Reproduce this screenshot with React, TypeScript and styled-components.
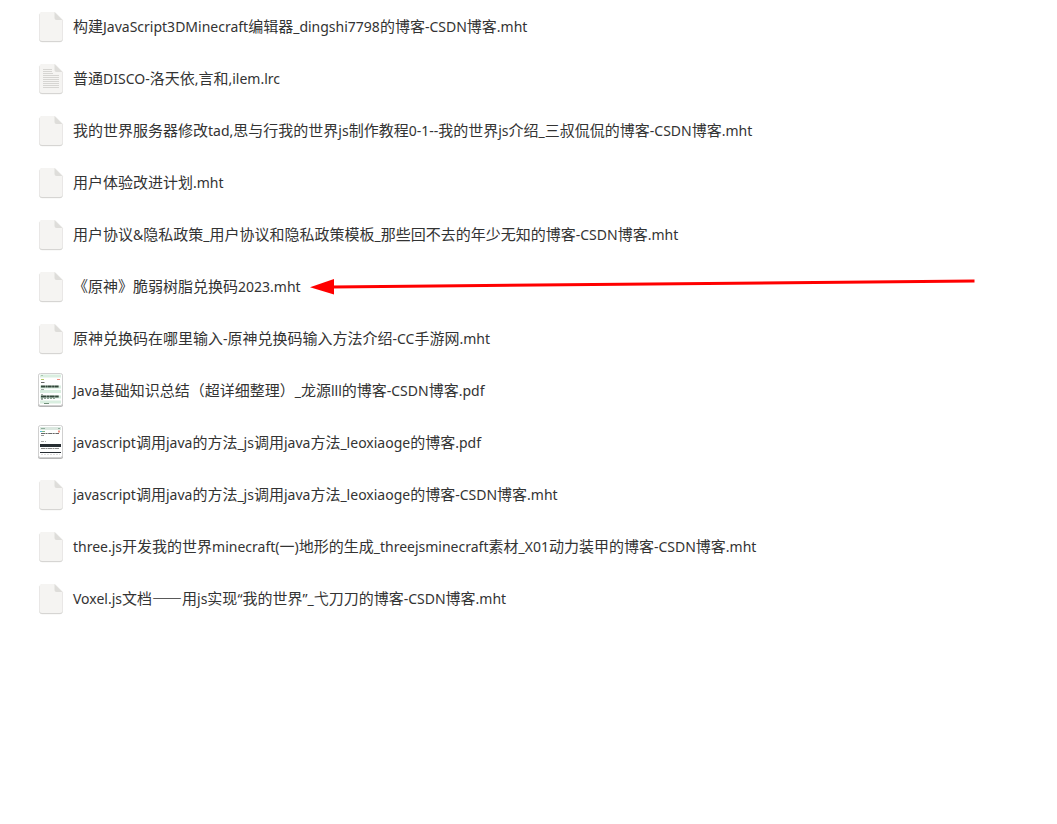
import React from "react";
import styled, { createGlobalStyle } from "styled-components";

const GlobalStyle = createGlobalStyle`
  body {
    margin: 0;
    background: #ffffff;
    color: #333333;
    font-family: "Noto Sans CJK SC", "Noto Sans", sans-serif;
  }
`;

const FileList = styled.ul`
  position: relative;
  margin: 0;
  padding: 0 36px;
  list-style: none;
`;

const FileRow = styled.li`
  display: flex;
  align-items: center;
  gap: 7px;
  height: 52px;
`;

const FileIcon = styled.svg`
  flex: none;
  display: block;
  width: 30px;
  height: 40px;
`;

const FileName = styled.span`
  font-size: 15px;
  line-height: 20px;
  white-space: nowrap;
`;

const Latin = styled.span`
  font-family: "Noto Sans", sans-serif;
  font-size: 14px;
`;

const Arrow = styled.svg`
  position: absolute;
  left: 310px;
  top: 276px;
  width: 668px;
  height: 22px;
  pointer-events: none;
`;

type Kind = "blank" | "text" | "pdfGreen" | "pdfDark";

const sheet = "M6.500 6H19l7.500 7.500v19a2.500 2.500 0 0 1-2.500 2.500H6a2.500 2.500 0 0 1-2.500-2.500v-24A2.500 2.500 0 0 1 6.500 6z";

function PageIcon({ lines }: { lines?: boolean }) {
  return (
    <FileIcon viewBox="0 0 30 40" aria-hidden="true">
      <path d={sheet} transform="translate(0 .8)" fill="#ececea" stroke="#e9e9e8" strokeWidth="1" />
      <path d={sheet} transform="translate(0 .7)" fill="#cfcecb" />
      <path d={sheet} fill="#f5f4f2" />
      <path d="M18.500 6l8 8h-6a2 2 0 0 1-2-2z" fill="#deddda" />
      {lines && (
        <path
          d="M7 11.500h9M7 13.500h9M7 15.500h10M7 17.500h16M7 19.500h16M7 21.500h16M7 23.500h16M7 25.500h16M7 27.500h16M7 29.500h16"
          stroke="#d6d5d2"
          strokeWidth="1"
        />
      )}
    </FileIcon>
  );
}

function Thumbnail({ dark }: { dark?: boolean }) {
  return (
    <FileIcon viewBox="0 0 30 40" aria-hidden="true">
      <rect x="2" y="4" width="25" height="33" rx="2.500" fill="#b4b4b4" />
      <rect x="2.500" y="3.500" width="24" height="32" rx="2" fill="#fff" stroke="#d0d0d0" />
      {dark ? (
        <g>
          <path d="M4 6.500h21" stroke="#dbe8e0" strokeWidth="3" />
          <path d="M5 6.500h4M22 6.500h2" stroke="#8fae9c" />
          <path d="M4 9.500h2" stroke="#58b7d8" />
          <path d="M6 9.500h3" stroke="#80b882" />
          <path d="M22 9.500h2" stroke="#ef8f80" strokeWidth="2" />
          <path d="M5 11.500h18" stroke="#666" strokeDasharray="4 .5 2 .7" />
          <path d="M5 13.500h3" stroke="#999" />
          <path d="M5 19.500h5" stroke="#aaa" strokeDasharray="3 1" />
          <path d="M4 23.500h21" stroke="#272d32" strokeWidth="3" />
          <path d="M5 26.500h18" stroke="#8d8d8d" strokeDasharray="4 .5 2 .5" />
          <path d="M4 30.500h21" stroke="#272d32" strokeWidth="1" />
          <path d="M5 32.500h19" stroke="#ddd" strokeDasharray="2 1" />
        </g>
      ) : (
        <g>
          <path d="M4 6h21M4 17h21M4 21.500h21M4 27h21M4 32h21" stroke="#d9eee0" strokeWidth="3" />
          <path d="M5 5.500h2" stroke="#a9c6b1" />
          <path d="M5 9.500h3" stroke="#b6c967" />
          <path d="M21 9.500h3" stroke="#ef8f80" strokeWidth="1" />
          <path d="M5 12.500h4" stroke="#666" strokeDasharray="3 .5" />
          <path d="M5 16.500h18" stroke="#33463a" strokeWidth="2" strokeDasharray="4 .4 2 .3" />
          <path d="M5 19.500h3M5 24.500h2M5 29.500h2" stroke="#a5afa8" />
          <path d="M5 26.500h18" stroke="#33463a" strokeWidth="2" strokeDasharray="5 .4 3 .3" />
          <path d="M5 28.500h14" stroke="#8ca092" strokeDasharray="2 1" />
          <path d="M8 33.500h5" stroke="#71907a" />
        </g>
      )}
    </FileIcon>
  );
}

const icons: Record<Kind, React.ReactNode> = {
  blank: <PageIcon />,
  text: <PageIcon lines />,
  pdfGreen: <Thumbnail />,
  pdfDark: <Thumbnail dark />,
};

const files: { name: string; kind: Kind }[] = [
  { name: "构建JavaScript3DMinecraft编辑器_dingshi7798的博客-CSDN博客.mht", kind: "blank" },
  { name: "普通DISCO-洛天依,言和,ilem.lrc", kind: "text" },
  { name: "我的世界服务器修改tad,思与行我的世界js制作教程0-1--我的世界js介绍_三叔侃侃的博客-CSDN博客.mht", kind: "blank" },
  { name: "用户体验改进计划.mht", kind: "blank" },
  { name: "用户协议&隐私政策_用户协议和隐私政策模板_那些回不去的年少无知的博客-CSDN博客.mht", kind: "blank" },
  { name: "《原神》脆弱树脂兑换码2023.mht", kind: "blank" },
  { name: "原神兑换码在哪里输入-原神兑换码输入方法介绍-CC手游网.mht", kind: "blank" },
  { name: "Java基础知识总结（超详细整理）_龙源lll的博客-CSDN博客.pdf", kind: "pdfGreen" },
  { name: "javascript调用java的方法_js调用java方法_leoxiaoge的博客.pdf", kind: "pdfDark" },
  { name: "javascript调用java的方法_js调用java方法_leoxiaoge的博客-CSDN博客.mht", kind: "blank" },
  { name: "three.js开发我的世界minecraft(一)地形的生成_threejsminecraft素材_X01动力装甲的博客-CSDN博客.mht", kind: "blank" },
  { name: "Voxel.js文档——用js实现“我的世界”_弋刀刀的博客-CSDN博客.mht", kind: "blank" },
];

// Latin letters, digits and quotes run slightly smaller than the Chinese text.
const latinRun = /([\x20-\x7e“”]+)/;

function MixedText({ text }: { text: string }) {
  return (
    <>
      {text.split(latinRun).map((run, i) => (i % 2 ? <Latin key={i}>{run}</Latin> : run))}
    </>
  );
}

export default function App() {
  return (
    <main lang="zh-CN">
      <GlobalStyle />
      <FileList>
        {files.map((file) => (
          <FileRow key={file.name}>
            {icons[file.kind]}
            <FileName>
              <MixedText text={file.name} />
            </FileName>
          </FileRow>
        ))}
        <Arrow viewBox="0 0 668 22" aria-hidden="true">
          <path d="M22 11L664.500 5" stroke="#ff0000" strokeWidth="3" />
          <path d="M0 11.300L24 3v15.500z" fill="#ff0000" />
        </Arrow>
      </FileList>
    </main>
  );
}
